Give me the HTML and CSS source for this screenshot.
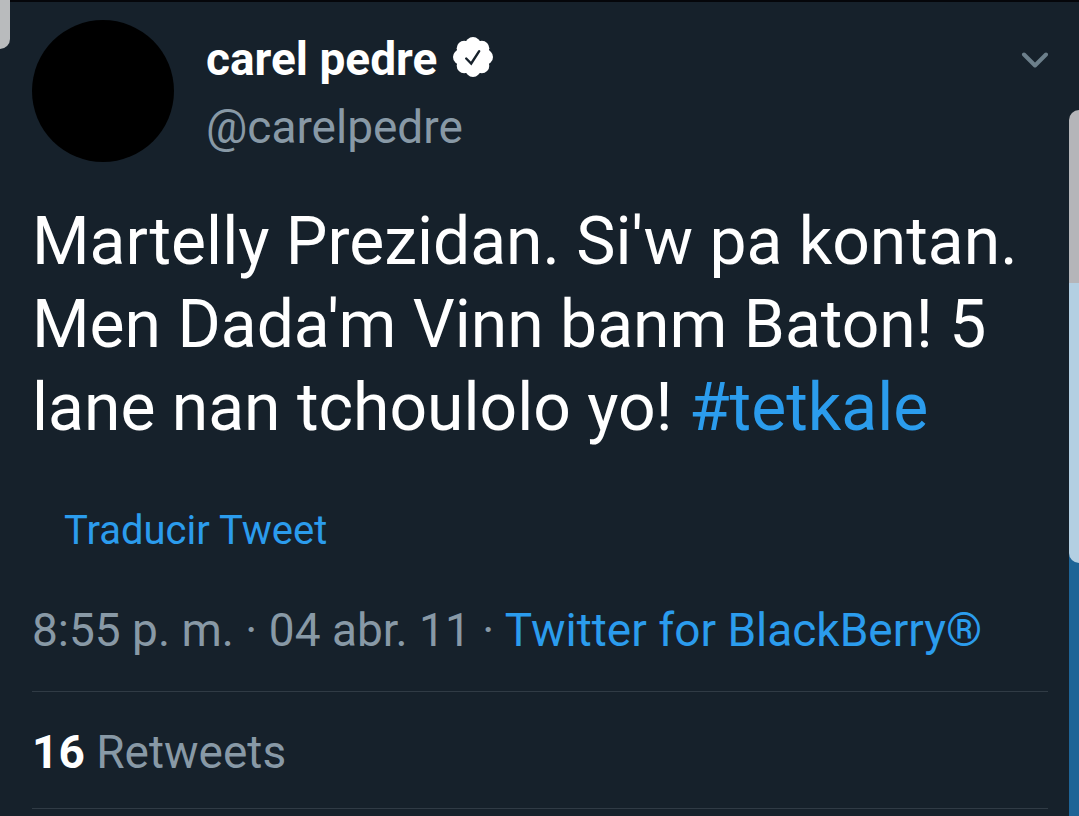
FILE: index.html
```html
<!DOCTYPE html>
<html lang="ht">
<head>
<meta charset="utf-8">
<meta name="viewport" content="width=device-width, initial-scale=1">
<title>carel pedre</title>
<link rel="stylesheet" href="styles.css">
</head>
<body>
<div class="screen">
  <main class="tweet">
    <header class="head">
      <div class="avatar"></div>
      <div class="author">
        <div class="name-row">
          <strong class="name">carel pedre</strong>
          <svg class="badge" viewBox="0 0 40 40" aria-hidden="true">
            <g fill="#fff">
              <circle cx="20" cy="20" r="17.500"/>
              <circle cx="20" cy="7.500" r="7.500"/><circle cx="28.800" cy="11.200" r="7.500"/>
              <circle cx="32.500" cy="20" r="7.500"/><circle cx="28.800" cy="28.800" r="7.500"/>
              <circle cx="20" cy="32.500" r="7.500"/><circle cx="11.200" cy="28.800" r="7.500"/>
              <circle cx="7.500" cy="20" r="7.500"/><circle cx="11.200" cy="11.200" r="7.500"/>
            </g>
            <path d="M13.200 21.500l5 5L26.200 14.200" fill="none" stroke="#16212b" stroke-width="2.400" stroke-linecap="round"/>
          </svg>
        </div>
        <span class="handle">@carelpedre</span>
      </div>
      <button class="menu" type="button" aria-label="Menu">
        <svg class="chevron" viewBox="0 0 28 18" aria-hidden="true">
          <path d="M4 3.500l11 11 11-11" fill="none" stroke="#6c7f8b" stroke-width="4" stroke-linecap="round" stroke-linejoin="round"/>
        </svg>
      </button>
    </header>
    <p class="text">Martelly Prezidan. Si'w pa kontan. Men Dada'm Vinn banm Baton! 5 lane nan tchoulolo yo! <a class="link" href="#tetkale">#tetkale</a></p>
    <a class="link translate" href="#translate">Traducir Tweet</a>
    <p class="meta">8:55 p. m. · 04 abr. 11 · <a class="link" href="#source">Twitter for BlackBerry®</a></p>
    <p class="stats"><strong class="count">16</strong> Retweets</p>
  </main>
  <div class="edge"><div class="edge-panel"></div></div>
  <div class="corner"></div>
</div>
</body>
</html>
```
FILE: styles.css
```css
* {
  box-sizing: border-box;
}

body {
  margin: 0;
  background: #16212b;
  color: #fff;
  font-family: Roboto, sans-serif;
}

.screen {
  position: relative;
  display: grid;
  grid-template-columns: 1fr 10px;
  min-height: 100vh;
  border-top: 2px solid #05060a;
}

.tweet {
  padding: 18px 21px 0 32px;
}

.head {
  display: flex;
  align-items: flex-start;
}

.avatar {
  width: 142px;
  height: 142px;
  border-radius: 50%;
  background: #000;
}

.author {
  flex: 1;
  padding: 5px 0 0 32px;
}

.name-row {
  display: flex;
  align-items: center;
  gap: 16px;
}

.name {
  font-size: 46px;
  line-height: 68px;
  font-weight: 700;
}

.badge {
  width: 40px;
  height: 40px;
  margin-bottom: 4px;
}

.handle {
  display: block;
  font-size: 46px;
  line-height: 68px;
  color: #8899a6;
}

.menu {
  padding: 31px 0 0;
  border: 0;
  background: none;
}

.chevron {
  display: block;
  width: 28px;
  height: 18px;
}

.text {
  margin: 38px 0 0;
  font-size: 66px;
  line-height: 83px;
}

.link {
  color: #2b9ced;
  text-decoration: none;
}

.translate {
  display: block;
  margin: 58px 0 0 32px;
  font-size: 40px;
  line-height: 48px;
}

.meta {
  margin: 45px 0 0;
  padding-bottom: 31px;
  border-bottom: 1px solid #303b45;
  font-size: 46px;
  line-height: 60px;
  color: #8899a6;
}

.stats {
  margin: 0;
  padding: 30px 0 26px;
  border-bottom: 1px solid #303b45;
  font-size: 46px;
  line-height: 60px;
  color: #8899a6;
}

.count {
  color: #fff;
}

.edge {
  padding-top: 108px;
  background: linear-gradient(#16212b 300px, #1e6496 300px);
}

.edge-panel {
  height: 453px;
  border-radius: 12px 0 0 12px;
  background: linear-gradient(#b5b5b9 173px, #b3cfe2 173px);
}

.corner {
  position: absolute;
  top: -2px;
  left: 0;
  width: 10px;
  height: 49px;
  border-radius: 0 0 10px 0;
  background: #b9bbbd;
}
```
